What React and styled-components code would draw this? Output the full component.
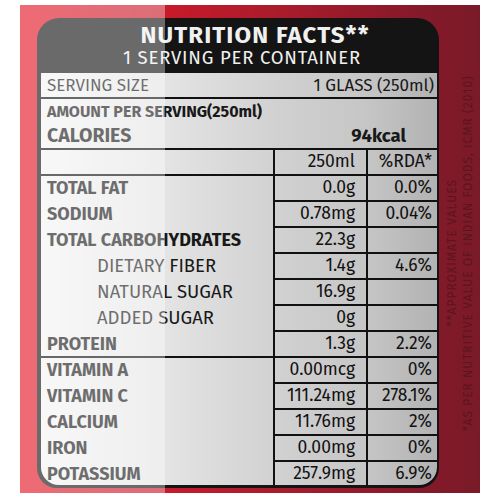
import React from "react";
import styled, { createGlobalStyle } from "styled-components";

const GlobalStyle = createGlobalStyle`
  html, body { margin: 0; padding: 0; background: #ffffff; }
  body { font-family: "Fira Sans", "Open Sans", sans-serif; }
`;

const Frame = styled.div`
  position: relative;
  box-sizing: border-box;
  margin: 5px 0 0 20px;
  width: 460px;
  height: 488px;
  padding: 13px 0 5px 17px;
  display: flex;
  background: linear-gradient(
    to right,
    #e51424 0%,
    #c81a2a 30%,
    #a81c2c 58%,
    #86192a 86%,
    #7a1a28 100%
  );
`;

const Wash = styled.div`
  position: absolute;
  left: 0;
  top: 0;
  bottom: 0;
  width: 145px;
  background: rgba(255, 255, 255, 0.37);
  pointer-events: none;
`;

const Panel = styled.div`
  box-sizing: border-box;
  width: 402px;
  height: 470px;
  background: #141414;
  border-radius: 22px 22px 20px 20px;
  padding: 0 2px 3px 4px;
  display: flex;
  flex-direction: column;
  flex-shrink: 0;
`;

const Header = styled.div`
  height: 55px;
  padding-top: 5px;
  box-sizing: border-box;
  display: flex;
  flex-direction: column;
  align-items: center;
  color: #f0f0f0;
`;

const Title = styled.div`
  font-size: 24px;
  font-weight: 700;
  line-height: 24px;
  letter-spacing: 1.1px;
  padding-left: ${(p) => p.$shift || 0}px;
`;

const Subtitle = styled.div`
  font-size: 18.5px;
  font-weight: 400;
  line-height: 22px;
  letter-spacing: 0.8px;
  padding-left: ${(p) => p.$shift || 0}px;
`;

const Body = styled.div`
  flex: 1;
  border-radius: 0 0 18px 18px;
  overflow: hidden;
  color: #181818;
  background: linear-gradient(
    to right,
    #f4f4f4 0%,
    #e4e4e4 31%,
    #d2d2d2 58%,
    #c6c6c6 82%,
    #b2b2b2 100%
  );
`;

const ServingRow = styled.div`
  height: 24px;
  display: flex;
  justify-content: space-between;
  align-items: center;
  padding: 0 3px 0 6px;
  font-size: 17px;
  border-bottom: 2px solid #111;
`;

const AmountLine = styled.div`
  height: 24px;
  line-height: 26px;
  padding-left: 6px;
  font-size: 16px;
  font-weight: 700;
`;

const CaloriesRow = styled.div`
  height: 25px;
  display: flex;
  justify-content: space-between;
  align-items: center;
  padding: 0 31px 0 6px;
  font-size: 19.5px;
  font-weight: 700;
  & > span:last-child {
    font-size: 18.5px;
  }
`;

const Row = styled.div`
  display: grid;
  grid-template-columns: 232px 93px 71px;
  height: 26px;
`;

const Label = styled.div`
  border-top: 2px solid ${(p) => (p.$full ? "#111" : "transparent")};
  padding-left: ${(p) => (p.$sub ? 56 : 6)}px;
  font-size: ${(p) => (p.$sub ? 18.5 : 18)}px;
  font-weight: ${(p) => (p.$sub ? 400 : 700)};
  line-height: 24px;
  white-space: nowrap;
`;

const Cell = styled.div`
  border-top: 2px solid #111;
  border-left: 2px solid #111;
  text-align: right;
  padding-right: ${(p) => p.$pad}px;
  font-size: 17.5px;
  line-height: 24px;
  white-space: nowrap;
  color: #111;
`;

const SideNotes = styled.div`
  display: flex;
  gap: 4px;
  padding: 0 0 0 7px;
  align-items: center;
`;

const Note = styled.div`
  writing-mode: vertical-rl;
  transform: rotate(180deg);
  font-size: 12px;
  line-height: 12px;
  letter-spacing: 1px;
  color: #5c1420;
  white-space: nowrap;
`;

const rows = [
  { label: "", value: "250ml", rda: "%RDA*", full: true },
  { label: "TOTAL FAT", value: "0.0g", rda: "0.0%", full: true },
  { label: "SODIUM", value: "0.78mg", rda: "0.04%" },
  { label: "TOTAL CARBOHYDRATES", value: "22.3g", rda: "" },
  { label: "DIETARY FIBER", value: "1.4g", rda: "4.6%", sub: true },
  { label: "NATURAL SUGAR", value: "16.9g", rda: "", sub: true },
  { label: "ADDED SUGAR", value: "0g", rda: "", sub: true },
  { label: "PROTEIN", value: "1.3g", rda: "2.2%" },
  { label: "VITAMIN A", value: "0.00mcg", rda: "0%", full: true },
  { label: "VITAMIN C", value: "111.24mg", rda: "278.1%" },
  { label: "CALCIUM", value: "11.76mg", rda: "2%" },
  { label: "IRON", value: "0.00mg", rda: "0%" },
  { label: "POTASSIUM", value: "257.9mg", rda: "6.9%" },
];

export default function App() {
  return (
    <>
      <GlobalStyle />
      <Frame>
        <Panel>
          <Header>
            <Title $shift={32}>NUTRITION FACTS**</Title>
            <Subtitle $shift={6}>1 SERVING PER CONTAINER</Subtitle>
          </Header>
          <Body>
            <ServingRow>
              <span>SERVING SIZE</span>
              <span>1 GLASS (250ml)</span>
            </ServingRow>
            <AmountLine>AMOUNT PER SERVING(250ml)</AmountLine>
            <CaloriesRow>
              <span>CALORIES</span>
              <span>94kcal</span>
            </CaloriesRow>
            {rows.map((r, i) => (
              <Row key={i}>
                <Label $full={r.full} $sub={r.sub}>
                  {r.label}
                </Label>
                <Cell $pad={11}>{r.value}</Cell>
                <Cell $pad={5}>{r.rda}</Cell>
              </Row>
            ))}
          </Body>
        </Panel>
        <SideNotes>
          <Note>**APPROXIMATE VALUES</Note>
          <Note>*AS PER NUTRITIVE VALUE OF INDIAN FOODS, ICMR (2010)</Note>
        </SideNotes>
        <Wash />
      </Frame>
    </>
  );
}
